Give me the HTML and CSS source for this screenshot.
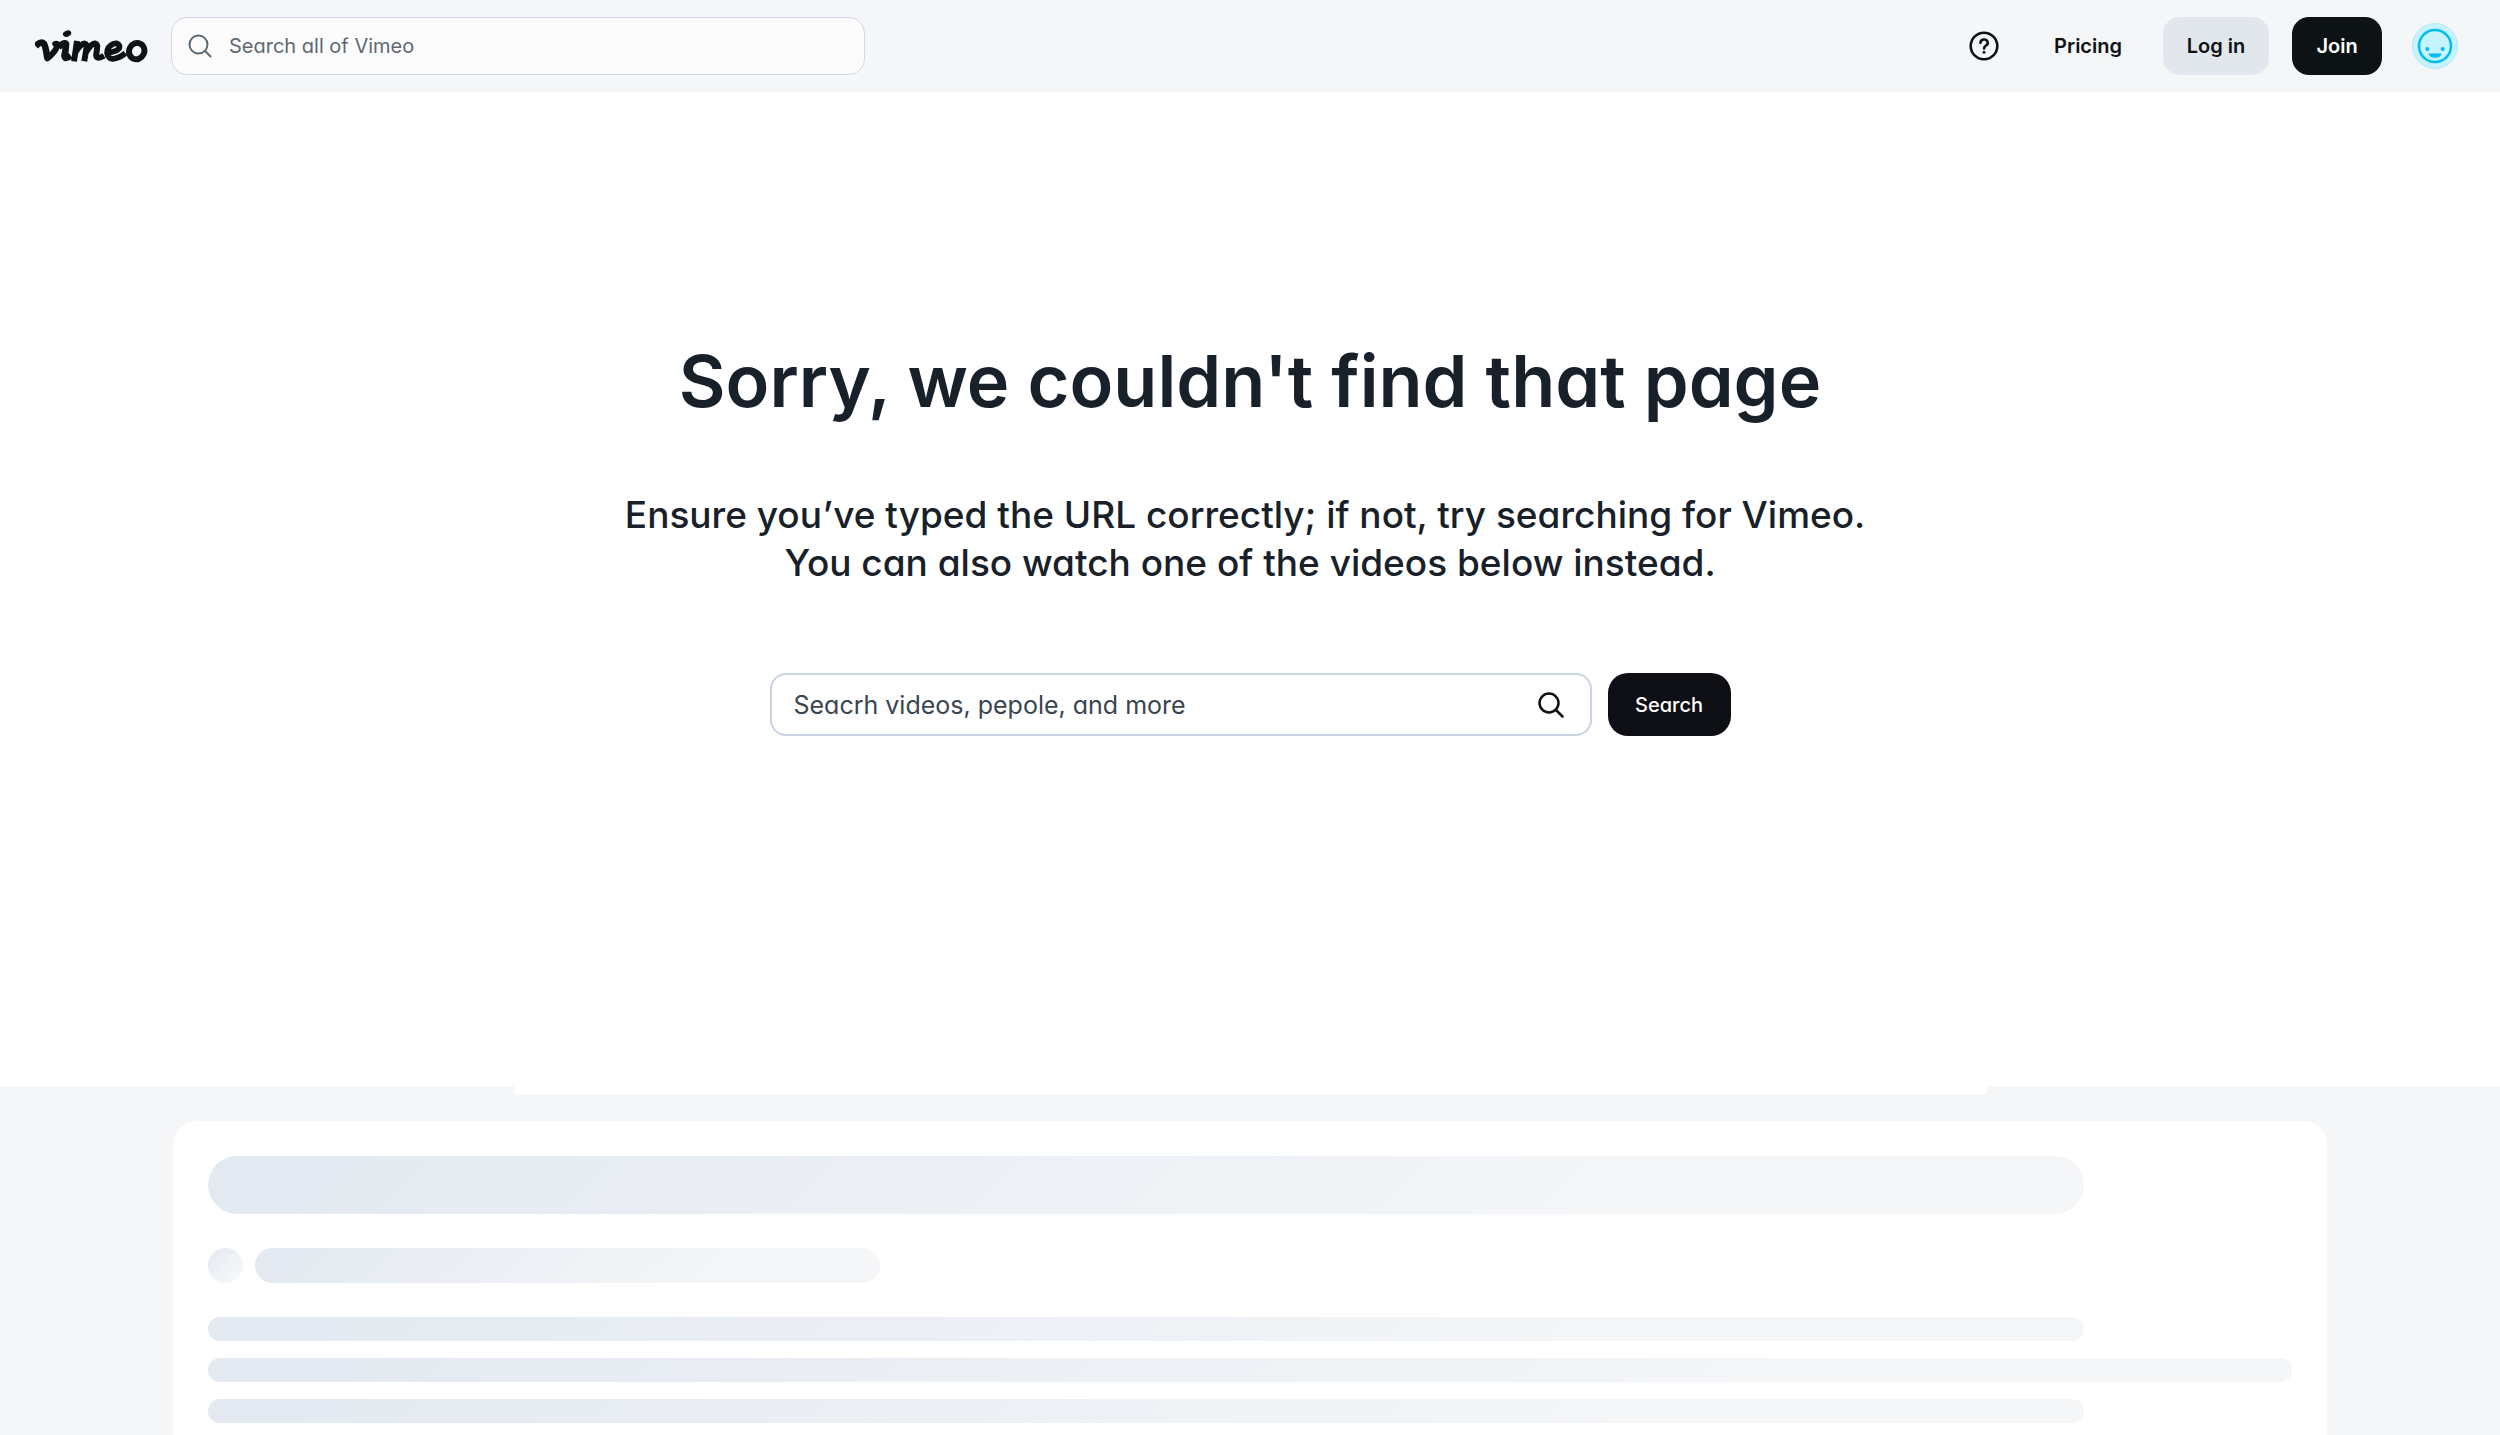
FILE: index.html
```html
<!DOCTYPE html>
<html lang="en">
<head>
<meta charset="utf-8">
<meta name="viewport" content="width=device-width, initial-scale=1">
<title>Page not found</title>
<link rel="stylesheet" href="styles.css">
</head>
<body>
<header class="topbar">
  <a class="logo" href="#" aria-label="Vimeo home">
    <svg viewBox="28 30 342 100" fill="none" stroke="currentColor" stroke-width="20" stroke-linejoin="round" aria-hidden="true">
      <path d="M30 79Q46 63 55 72Q60 80 65 114" />
      <path d="M65 116Q88 98 96 78Q98 70 89 72" stroke-linecap="round" stroke-width="18" />
      <path d="M99 82Q115 66 122 72Q121 94 117 108Q119 121 136 108" />
      <ellipse cx="125" cy="41" rx="13" ry="9" transform="rotate(-20 125 41)" fill="currentColor" stroke="none" />
      <path stroke-width="18" d="M155 63L146 125M150 98Q166 72 178 71Q187 73 184 84L177 125M182 98Q198 72 209 71Q219 73 216 86L213 106Q215 121 237 108" />
      <path stroke-width="17" d="M252 98Q285 94 284 79Q279 67 265 72Q246 80 246 100Q249 120 268 117Q288 113 302 100" />
      <ellipse cx="336" cy="94" rx="23" ry="25" stroke-width="18" transform="rotate(25 336 94)" />
    </svg>
  </a>
  <form class="site-search" role="search">
    <svg class="icon-search-sm" viewBox="0 0 24 24" fill="none" stroke="currentColor" stroke-width="2" stroke-linecap="round" aria-hidden="true"><circle cx="10.500" cy="10.500" r="9"/><path d="M17 17l5.500 5.500"/></svg>
    <input type="search" aria-label="Search all of Vimeo" placeholder="Search all of Vimeo">
  </form>
  <nav class="account">
    <button class="help" type="button" aria-label="Help">
      <svg viewBox="0 0 30 30" fill="none" stroke="currentColor" stroke-linecap="round" aria-hidden="true"><circle cx="15" cy="15" r="13.300" stroke-width="2.600"/><path stroke-width="2.600" d="M11.500 11.800a3.600 3.300 0 1 1 5.300 2.900q-1.700 1-1.700 2.700"/><circle cx="15" cy="21.300" r="1.500" fill="currentColor" stroke="none"/></svg>
    </button>
    <a class="pricing" href="#">Pricing</a>
    <button class="btn login" type="button">Log in</button>
    <button class="btn join" type="button">Join</button>
    <button class="avatar" type="button" aria-label="Account menu">
      <svg viewBox="0 0 46 46" aria-hidden="true"><circle cx="23" cy="23" r="22.500" fill="#c5f3ff" stroke="#b5e8f5"/><circle cx="23" cy="23" r="16" fill="none" stroke="#00bdf0" stroke-width="2.500"/><circle cx="15.300" cy="26" r="2" fill="#00bdf0"/><circle cx="30.700" cy="26" r="2" fill="#00bdf0"/><path fill="#00bdf0" d="M16.500 30.500h13.200q-1.200 4.300-6.600 4.300t-6.600-4.300z"/></svg>
    </button>
  </nav>
</header>
<main>
  <section class="hero">
    <h1>Sorry, we couldn't find that page</h1>
    <p>Ensure you’ve typed the URL correctly; if not, try searching for Vimeo.&nbsp;<br>You can also watch one of the videos below instead.</p>
    <form class="find" role="search">
      <div class="field">
        <input type="search" aria-label="Search videos" placeholder="Seacrh videos, pepole, and more">
        <svg class="icon-search" viewBox="0 0 26 26" fill="none" stroke="currentColor" stroke-width="2.500" stroke-linecap="round" aria-hidden="true"><circle cx="11" cy="11" r="9.500"/><path d="M18 18l6.500 6.500"/></svg>
      </div>
      <button class="submit" type="button">Search</button>
    </form>
  </section>
  <section class="feed" aria-busy="true">
    <div class="tab"></div>
    <div class="card">
      <div class="bar bar-title"></div>
      <div class="byline"><div class="bar dot"></div><div class="bar bar-name"></div></div>
      <div class="lines">
        <div class="bar line short"></div>
        <div class="bar line"></div>
        <div class="bar line short"></div>
      </div>
    </div>
  </section>
</main>
</body>
</html>
```
FILE: styles.css
```css
* { box-sizing: border-box; }
body {
  margin: 0;
  min-height: 100vh;
  display: flex;
  flex-direction: column;
  background: #fff;
  color: #182129;
  font-family: Inter, "Liberation Sans", sans-serif;
  font-feature-settings: "cv11";
}
svg { display: block; }
button, input { font: inherit; font-feature-settings: inherit; color: inherit; }
button { border: 0; padding: 0; background: none; cursor: pointer; }
input { border: 0; outline: 0; padding: 0; background: none; min-width: 0; flex: 1; }

.topbar {
  display: flex;
  align-items: center;
  height: 92px;
  padding: 0 42px 0 35px;
  background: #f4f6f8;
  color: #0d1214;
}
.logo { color: inherit; }
.logo svg { width: 113px; height: 33px; }
.site-search {
  display: flex;
  align-items: center;
  gap: 17px;
  width: 694px;
  height: 58px;
  margin-left: 23px;
  padding: 0 16px;
  border: 1px solid #d3d9e5;
  border-radius: 16px;
  background: #fcfcfd;
  color: #5c6873;
}
.site-search input { font-size: 20px; }
.site-search input::placeholder { color: #5c6873; opacity: 1; }
.icon-search-sm { width: 24px; height: 24px; }
.account {
  display: flex;
  align-items: center;
  margin-left: auto;
  font-size: 20px;
  font-weight: 600;
}
.help { margin-right: 55px; }
.help svg { width: 30px; height: 30px; }
.pricing { margin-right: 41px; color: inherit; text-decoration: none; }
.btn { height: 58px; border-radius: 17px; }
.login { width: 106px; margin-right: 23px; background: #e2e6ed; }
.join { width: 90px; margin-right: 30px; background: #0d1214; color: #fff; }
.avatar svg { width: 46px; height: 46px; }

main { flex: 1; display: flex; flex-direction: column; }
.hero {
  display: flex;
  flex-direction: column;
  align-items: center;
  padding: 243px 24px 350px;
  text-align: center;
}
h1 { margin: 0; font-size: 72px; line-height: 92px; font-weight: 600; }
.hero p { margin: 64px 0 86px; font-size: 37px; line-height: 48px; font-weight: 500; }
.find { display: flex; gap: 16px; }
.field {
  display: flex;
  align-items: center;
  width: 822px;
  height: 63px;
  padding: 0 26px 0 22px;
  border: 2px solid #c9d3e4;
  border-radius: 16px;
  color: #0d0f15;
}
.field input { font-size: 25px; }
.field input::placeholder { color: #394550; opacity: 1; }
.icon-search { width: 26px; height: 26px; }
.submit {
  width: 123px;
  height: 63px;
  border-radius: 20px;
  background: #0d0f15;
  color: #fff;
  font-size: 20px;
  font-weight: 500;
}

.feed {
  flex: 1;
  display: flex;
  flex-direction: column;
  padding: 0 173px;
  background: #f4f6f8;
}
.tab { width: 1473px; max-width: 100%; height: 8px; margin: 0 auto 27px; background: #fff; }
.card {
  flex: 1;
  display: flex;
  flex-direction: column;
  gap: 34px;
  padding: 35px 35px 12px;
  border-radius: 24px 24px 0 0;
  background: #fff;
}
.bar { border-radius: 30px; background: linear-gradient(135deg, #e3e9f1, #f4f6f8 75%); }
.bar-title { width: 90%; height: 58px; }
.byline { display: flex; gap: 12px; }
.dot { width: 35px; height: 35px; }
.bar-name { width: 30%; height: 35px; }
.lines { display: flex; flex-direction: column; gap: 17px; }
.line { height: 24px; }
.short { width: 90%; }
```
